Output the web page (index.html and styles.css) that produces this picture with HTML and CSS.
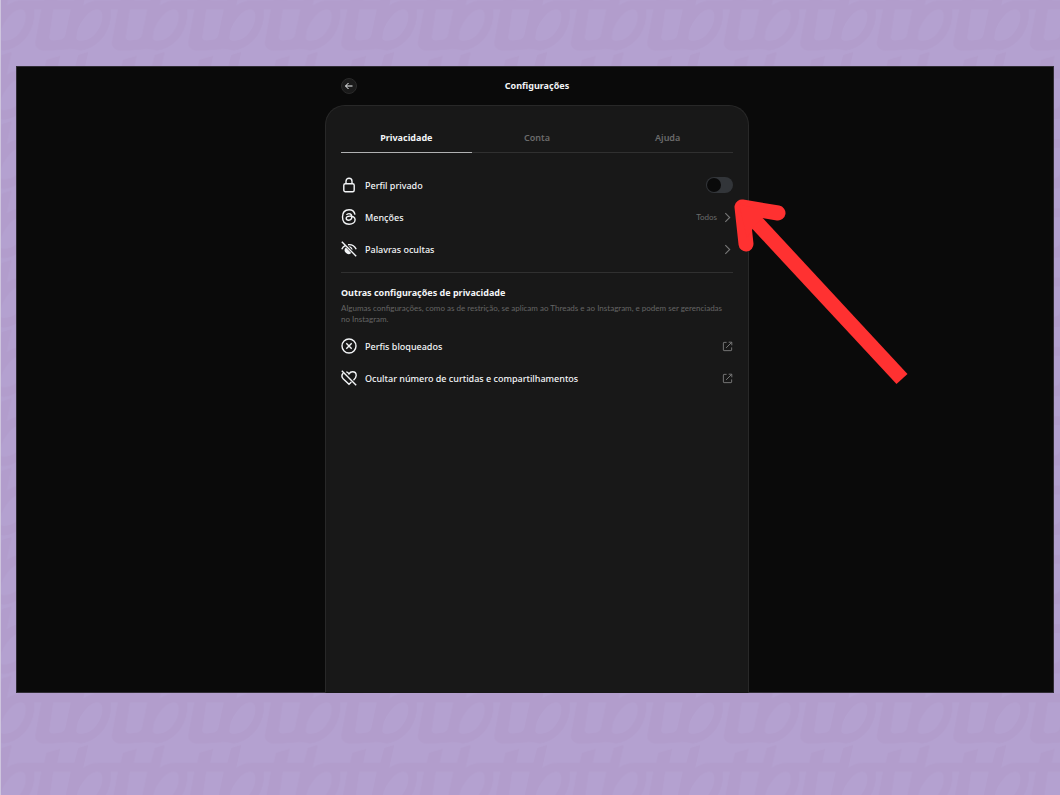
FILE: index.html
```html
<!DOCTYPE html>
<html lang="pt-BR">
<head>
<meta charset="utf-8">
<meta name="viewport" content="width=device-width, initial-scale=1">
<title>Configurações</title>
<link rel="stylesheet" href="styles.css">
</head>
<body>
<div class="stage">
  <svg class="backdrop" aria-hidden="true">
    <defs>
      <pattern id="motif" width="76.5" height="69.3" patternUnits="userSpaceOnUse" patternTransform="translate(33.3 -17.5)">
        <path class="motif-shape" fill-rule="evenodd" d="M0 18H10L12 8L26 4L23 18H40L44 3L54 0L49 23Q56 18 63 18H77V30Q76 48 66 58Q57 67 46 68Q38 66 30 67Q20 68 8 68Q1 67 1 60L7 27H0ZM19 27L15 55Q15 58 19 58L27 57Q30 56 31 53L36.500 27ZM42 56Q42 46 49 37Q55 28 62 27Q68 26 68 34Q68 42 62 50Q57 57 49 58Q43 59 42 56Z"/>
      </pattern>
    </defs>
    <rect width="100%" height="100%" fill="url(#motif)"/>
  </svg>
  <div class="screen">
    <main class="column">
      <header class="topbar">
        <button class="back" type="button" aria-label="Voltar">
          <svg viewBox="0 0 10 10" width="10" height="10"><path d="M8.500 5H1.600M4.500 2L1.500 5L4.500 8"/></svg>
        </button>
        <h1 class="title">Configurações</h1>
      </header>
      <section class="card">
        <nav class="tabs">
          <a class="tab tab-active" href="#privacidade" aria-current="page">Privacidade</a>
          <a class="tab" href="#conta">Conta</a>
          <a class="tab" href="#ajuda">Ajuda</a>
        </nav>
        <div class="list list-first">
          <label class="row" for="private">
            <svg class="icon" viewBox="0 0 16 16"><rect x="2.800" y="6.800" width="10.400" height="8" rx="1.500"/><path d="M5 6.800V4.200a3 3 0 0 1 6 0V6.800"/></svg>
            <span class="label">Perfil privado</span>
            <input class="switch" id="private" type="checkbox" role="switch">
          </label>
          <a class="row" href="#mencoes">
            <svg class="icon" viewBox="0 0 16 16"><path d="M14 5.600C13.300 2.300 11.300 .8 8.100 .8C3.800 .8 1.500 3.600 1.500 8s2.300 7.200 6.600 7.200c3.400 0 6-1.900 6-4.500c0-2.500-2.500-3.600-5.200-3.600c-2.200 0-3.700.7-3.700 2.200c0 1.200 1 1.900 2.500 1.900c2 0 3.100-1.200 3.100-3.400c0-2.100-1-3.200-2.800-3.200c-1.200 0-2 .5-2.500 1.300"/></svg>
            <span class="label">Menções</span>
            <span class="value">Todos</span>
            <svg class="chevron" viewBox="0 0 10 10"><path d="M3 1L7 5L3 9"/></svg>
          </a>
          <a class="row" href="#palavras">
            <svg class="icon" viewBox="0 0 16 16"><path d="M.8 .8L15.200 15.200M.8 8.300C1.500 6.800 2.600 5.500 4.100 4.700M7 3.700c3.800-.4 6.700 1.500 8.200 4.600"/><path d="M4.900 6.400a3.800 3.800 0 0 0 5.300 5.500ZM7.600 5.300a3.500 3.500 0 0 1 3.800 3.900Z" fill="currentColor" stroke="none"/></svg>
            <span class="label">Palavras ocultas</span>
            <svg class="chevron" viewBox="0 0 10 10"><path d="M3 1L7 5L3 9"/></svg>
          </a>
        </div>
        <div class="more">
          <h2 class="subtitle">Outras configurações de privacidade</h2>
          <p class="note">Algumas configurações, como as de restrição, se aplicam ao Threads e ao Instagram, e podem ser gerenciadas no Instagram.</p>
          <div class="list">
            <a class="row" href="#bloqueados">
              <svg class="icon" viewBox="0 0 16 16"><circle cx="8" cy="8" r="7"/><path d="M5.300 5.300L10.700 10.700M10.700 5.300L5.300 10.700"/></svg>
              <span class="label">Perfis bloqueados</span>
              <svg class="external" viewBox="0 0 12 12"><path d="M5 1.500H2.200Q1.500 1.500 1.500 2.200V9.800Q1.500 10.500 2.200 10.500H9.800Q10.500 10.500 10.500 9.800V7M7.300 1.300H10.700V4.700M10.500 1.500L4.500 7.500"/></svg>
            </a>
            <a class="row" href="#curtidas">
              <svg class="icon" viewBox="0 0 16 16"><path d="M.8 .8L15.200 15.200M2.100 3.200C.5 5 .8 7.400 2.400 9L8 14.300L10.400 12M5.300 1.900C6.500 2.100 7.400 2.900 8 3.900C9 2.400 10.200 1.800 11.500 1.800C13.800 1.800 15.200 3.500 15.200 5.500C15.200 7.500 14 8.800 12.500 10.200"/></svg>
              <span class="label">Ocultar número de curtidas e compartilhamentos</span>
              <svg class="external" viewBox="0 0 12 12"><path d="M5 1.500H2.200Q1.500 1.500 1.500 2.200V9.800Q1.500 10.500 2.200 10.500H9.800Q10.500 10.500 10.500 9.800V7M7.300 1.300H10.700V4.700M10.500 1.500L4.500 7.500"/></svg>
            </a>
          </div>
        </div>
      </section>
      <svg class="pointer" viewBox="0 0 180 190" aria-hidden="true"><path d="M14 14L171 183"/><path class="pointer-head" d="M47 17L11 11L15 48"/><path class="pointer-fill" d="M8 8L38 16L24 29L16 42Z"/></svg>
    </main>
  </div>
</div>
</body>
</html>
```
FILE: styles.css
```css
* { box-sizing: border-box; }

body {
  margin: 0;
  font-family: "Noto Sans", "Open Sans", sans-serif;
  font-size: 9px;
  color: #f3f5f7;
}

h1, h2, p { margin: 0; }
a { color: inherit; text-decoration: none; }

svg {
  fill: none;
  stroke: currentColor;
}

.stage {
  position: relative;
  display: flex;
  min-height: 100vh;
  padding: 66px 6px 102px 15px;
  background: #b4a1d0;
  border-left: 1px solid #cec5de;
}

.backdrop {
  position: absolute;
  inset: 0;
  width: 100%;
  height: 100%;
  stroke: none;
}

.motif-shape { fill: #b29dcc; }

.screen {
  position: relative;
  flex: 1;
  display: flex;
  justify-content: center;
  padding-left: 4px;
  background: #0a0a0a;
  box-shadow: inset 0 0 0 1px #302c35;
}

.column {
  position: relative;
  display: flex;
  flex-direction: column;
  width: 100%;
  max-width: 424px;
}

.topbar {
  display: grid;
  grid-template-columns: 16px 1fr 16px;
  align-items: center;
  height: 39px;
  padding: 0 16px;
}

.back {
  display: grid;
  place-items: center;
  width: 16px;
  height: 16px;
  padding: 0;
  color: #f3f5f7;
  background: #1a1a1a;
  border: 1px solid #2a2a2a;
  border-radius: 50%;
}

.title {
  font-size: 9px;
  font-weight: 700;
  line-height: 16px;
  text-align: center;
}

.card {
  flex: 1;
  padding: 16px 15px;
  background: #181818;
  border: 1px solid #282828;
  border-bottom: 0;
  border-radius: 20px 20px 0 0;
}

.tabs {
  display: grid;
  grid-template-columns: repeat(3, 1fr);
  height: 31px;
  border-bottom: 1px solid #303030;
}

.tab {
  height: 31px;
  font-weight: 600;
  line-height: 31px;
  text-align: center;
  color: #6b6b6b;
}

.tab-active {
  font-weight: 700;
  color: #f3f5f7;
  border-bottom: 1px solid #b0b1b2;
}

.list-first { padding: 16px 0 7px; }

.row {
  display: flex;
  align-items: center;
  height: 32px;
}

.icon {
  width: 16px;
  height: 16px;
  margin-right: 8px;
  stroke-width: 1.4;
}

.label {
  flex: 1;
  font-weight: 500;
}

.value {
  margin-right: 5px;
  font-family: Lato, sans-serif;
  font-size: 8px;
  color: #6b6b6b;
}

.chevron {
  width: 11px;
  height: 11px;
  color: #777777;
}

.external {
  width: 11px;
  height: 11px;
  color: #7d7d7d;
}

.switch {
  appearance: none;
  display: flex;
  align-items: center;
  width: 27px;
  height: 16px;
  margin: 0;
  padding: 0 1px;
  background: #323539;
  border-radius: 8px;
}

.switch::before {
  content: "";
  width: 14px;
  height: 14px;
  background: #0a0a0a;
  border-radius: 50%;
}

.switch:checked { justify-content: flex-end; }

.more {
  padding-top: 12px;
  border-top: 1px solid #303030;
}

.subtitle {
  font-size: 9px;
  font-weight: 700;
  line-height: 16px;
}

.note {
  margin: 2px 0 5px;
  font-family: Lato, sans-serif;
  font-size: 8px;
  line-height: 11px;
  color: #656565;
}

.pointer {
  position: absolute;
  top: 130px;
  left: 406px;
  width: 180px;
  height: 190px;
  color: #ff3131;
  stroke-width: 15;
  pointer-events: none;
}

.pointer-head {
  stroke-linecap: round;
  stroke-linejoin: round;
}

.pointer-fill {
  fill: currentColor;
  stroke: none;
}
```
